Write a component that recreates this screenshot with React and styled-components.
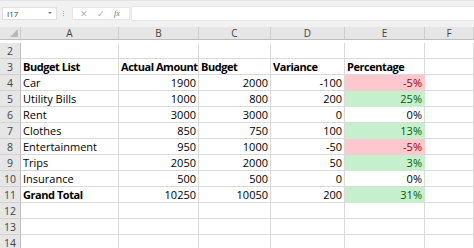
import React from "react";
import styled, { createGlobalStyle } from "styled-components";

const Global = createGlobalStyle`
  html, body {
    margin: 0;
    padding: 0;
    background: #ffffff;
  }
  body {
    font-family: "Open Sans", "Liberation Sans", sans-serif;
    overflow: hidden;
  }
`;

const Window = styled.div`
  width: 474px;
  height: 248px;
  overflow: hidden;
  background: #ffffff;
`;

const FormulaBar = styled.div`
  display: flex;
  align-items: center;
  height: 27px;
  box-sizing: border-box;
  padding: 6px 0 8px 2px;
  background: #f1f1f1;
  border-top: 1px solid #e4e4e4;
`;

const NameBox = styled.div`
  display: flex;
  align-items: center;
  justify-content: space-between;
  width: 55px;
  height: 13px;
  box-sizing: border-box;
  padding: 0 4px 0 4px;
  background: #ffffff;
  border: 1px solid #e0e0e0;
  font-size: 8px;
  color: #444;
`;

const Arrow = styled.span`
  width: 0;
  height: 0;
  border-left: 2px solid transparent;
  border-right: 2px solid transparent;
  border-top: 2px solid #777;
`;

const Dots = styled.div`
  display: flex;
  flex-direction: column;
  gap: 1px;
  margin: 0 8px 0 6px;
  span {
    width: 1px;
    height: 1px;
    background: #aaa;
  }
`;

const FxBox = styled.div`
  display: flex;
  align-items: center;
  width: 58px;
  height: 13px;
  box-sizing: border-box;
  padding-left: 7px;
  gap: 9px;
  background: #ffffff;
  border: 1px solid #e6e6e6;
  color: #b0b0b0;
  font-size: 9px;
`;

const Fx = styled.span`
  font-family: "Liberation Serif", serif;
  font-style: italic;
  font-size: 8px;
  color: #777;
`;

const Input = styled.div`
  flex: 1;
  height: 13px;
  margin-left: 1px;
  background: #ffffff;
  border: 1px solid #e6e6e6;
  border-right: none;
`;

const Sheet = styled.div`
  display: grid;
  grid-template-columns: 21px 98px 80px 72px 74px 80px 49px;
  grid-auto-rows: 16px;
  font-size: 11px;
  color: #000;
`;

const ColHead = styled.div`
  height: 13px;
  box-sizing: border-box;
  display: flex;
  align-items: center;
  justify-content: center;
  background: #e6e6e6;
  border-right: 1px solid #cdcdcd;
  border-bottom: 1px solid #bdbdbd;
  color: #444;
  font-size: 10px;
  position: relative;
`;

const Corner = styled(ColHead)`
  &::after {
    content: "";
    position: absolute;
    right: 2px;
    bottom: 2px;
    width: 0;
    height: 0;
    border-left: 8px solid transparent;
    border-bottom: 8px solid #b9b9b9;
  }
`;

const RowHead = styled.div`
  box-sizing: border-box;
  display: flex;
  align-items: center;
  justify-content: center;
  background: #e6e6e6;
  border-right: 1px solid #bdbdbd;
  border-bottom: 1px solid #d2d2d2;
  color: #444;
  font-size: 10.5px;
`;

const fills = {
  bad: { bg: "#ffc7ce", fg: "#9c0006" },
  good: { bg: "#c6efce", fg: "#006100" },
};

const Cell = styled.div`
  box-sizing: border-box;
  display: flex;
  align-items: center;
  justify-content: ${(p) => (p.$num ? "flex-end" : "flex-start")};
  padding: 0 2px;
  white-space: nowrap;
  overflow: visible;
  font-weight: ${(p) => (p.$bold ? 700 : 400)};
  letter-spacing: ${(p) => (p.$bold ? "-0.45px" : "0")};
  background: ${(p) => (p.$fill ? fills[p.$fill].bg : "#ffffff")};
  color: ${(p) => (p.$fill ? fills[p.$fill].fg : "#000")};
  border-right: 1px solid ${(p) => (p.$fill ? fills[p.$fill].bg : "#dadada")};
  border-bottom: 1px solid ${(p) => (p.$fill ? fills[p.$fill].bg : "#dadada")};
`;

const rows = [
  ["Car", 1900, 2000, -100, "-5%", "bad"],
  ["Utility Bills", 1000, 800, 200, "25%", "good"],
  ["Rent", 3000, 3000, 0, "0%", null],
  ["Clothes", 850, 750, 100, "13%", "good"],
  ["Entertainment", 950, 1000, -50, "-5%", "bad"],
  ["Trips", 2050, 2000, 50, "3%", "good"],
  ["Insurance", 500, 500, 0, "0%", null],
];

function EmptyRow({ n }) {
  return (
    <>
      <RowHead>{n}</RowHead>
      {[0, 1, 2, 3, 4, 5].map((i) => (
        <Cell key={i} />
      ))}
    </>
  );
}

export default function App() {
  return (
    <Window>
      <Global />
      <FormulaBar>
        <NameBox>
          <span>I17</span>
          <Arrow />
        </NameBox>
        <Dots>
          <span />
          <span />
          <span />
        </Dots>
        <FxBox>
          <span>✕</span>
          <span>✓</span>
          <Fx>fx</Fx>
        </FxBox>
        <Input />
      </FormulaBar>
      <Sheet>
        <Corner />
        {["A", "B", "C", "D", "E", "F"].map((c) => (
          <ColHead key={c}>{c}</ColHead>
        ))}
        <EmptyRow n={2} />
        <RowHead>3</RowHead>
        <Cell $bold>Budget List</Cell>
        <Cell $bold>Actual Amount</Cell>
        <Cell $bold>Budget</Cell>
        <Cell $bold>Variance</Cell>
        <Cell $bold>Percentage</Cell>
        <Cell />
        {rows.map((r, i) => (
          <React.Fragment key={r[0]}>
            <RowHead>{i + 4}</RowHead>
            <Cell>{r[0]}</Cell>
            <Cell $num>{r[1]}</Cell>
            <Cell $num>{r[2]}</Cell>
            <Cell $num>{r[3]}</Cell>
            <Cell $num $fill={r[5]}>
              {r[4]}
            </Cell>
            <Cell />
          </React.Fragment>
        ))}
        <RowHead>11</RowHead>
        <Cell $bold>Grand Total</Cell>
        <Cell $num>10250</Cell>
        <Cell $num>10050</Cell>
        <Cell $num>200</Cell>
        <Cell $num $fill="good">
          31%
        </Cell>
        <Cell />
        <EmptyRow n={12} />
        <EmptyRow n={13} />
        <EmptyRow n={14} />
      </Sheet>
    </Window>
  );
}
